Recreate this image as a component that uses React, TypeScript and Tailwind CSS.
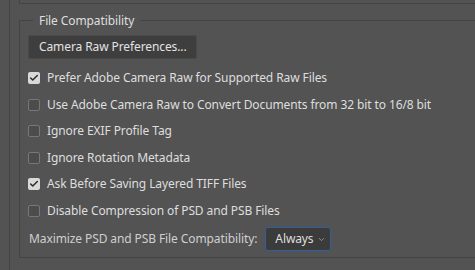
import { Check, ChevronDown } from "lucide-react";

const options = [
  { label: "Prefer Adobe Camera Raw for Supported Raw Files", checked: true },
  { label: "Use Adobe Camera Raw to Convert Documents from 32 bit to 16/8 bit", checked: false },
  { label: "Ignore EXIF Profile Tag", checked: false },
  { label: "Ignore Rotation Metadata", checked: false },
  { label: "Ask Before Saving Layered TIFF Files", checked: true },
  { label: "Disable Compression of PSD and PSB Files", checked: false },
];

function Box({ checked }: { checked: boolean }) {
  return checked ? (
    <span className="flex h-[12px] w-[12px] shrink-0 items-center justify-center rounded-[2px] bg-[#d9d9d9]">
      <Check className="h-[10px] w-[10px] text-[#2b2b2b]" strokeWidth={3.5} />
    </span>
  ) : (
    <span className="h-[12px] w-[12px] shrink-0 rounded-[2px] border border-[#777777] bg-[#4c4c4c]" />
  );
}

export default function App() {
  return (
    <div
      className="h-[270px] w-[475px] overflow-hidden bg-[#535353] text-[12px] tracking-[-0.1px] text-[#dedede]"
      style={{ fontFamily: '"Noto Sans", "Open Sans", sans-serif' }}
    >
      <div className="ml-[9px] h-full border-l border-[#444444] pl-[9px]">
        {/* bottom of previous group */}
        <div className="h-[4px] w-[500px] border-b border-l border-[#444444]" />

        <fieldset className="mt-[8px] w-[500px] border border-[#444444] pb-[6px] pl-[8px]">
          <legend className="ml-[5px] px-[6px] leading-[17px]">File Compatibility</legend>

          <button className="mt-[6px] h-[24px] rounded-[2px] border border-[#4a4a4a] bg-[#3e3e3e] pl-[10px] pr-[9px] leading-[22px] text-[#e2e2e2]">
            Camera Raw Preferences...
          </button>

          <div className="mt-[6px] flex flex-col">
            {options.map((o) => (
              <div key={o.label} className="flex h-[26.5px] items-center gap-[7px]">
                <Box checked={o.checked} />
                <span>{o.label}</span>
              </div>
            ))}
          </div>

          <div className="mt-[3px] flex items-center pl-[1px]">
            <span className="text-[#cfcfcf]">Maximize PSD and PSB File Compatibility:</span>
            <div className="ml-[8px] flex h-[24px] w-[66px] items-center justify-between rounded-[3px] border-[1.5px] border-[#2f5f9e] bg-[#3b3b3b] pl-[9px] pr-[4px]">
              <span>Always</span>
              <ChevronDown className="h-[9px] w-[9px] text-[#a8a8a8]" strokeWidth={2} />
            </div>
          </div>
        </fieldset>

        <div className="mt-[13px] pl-[11px] leading-[17px] text-[#9a9a9a]">
          History Log
        </div>
      </div>
    </div>
  );
}
